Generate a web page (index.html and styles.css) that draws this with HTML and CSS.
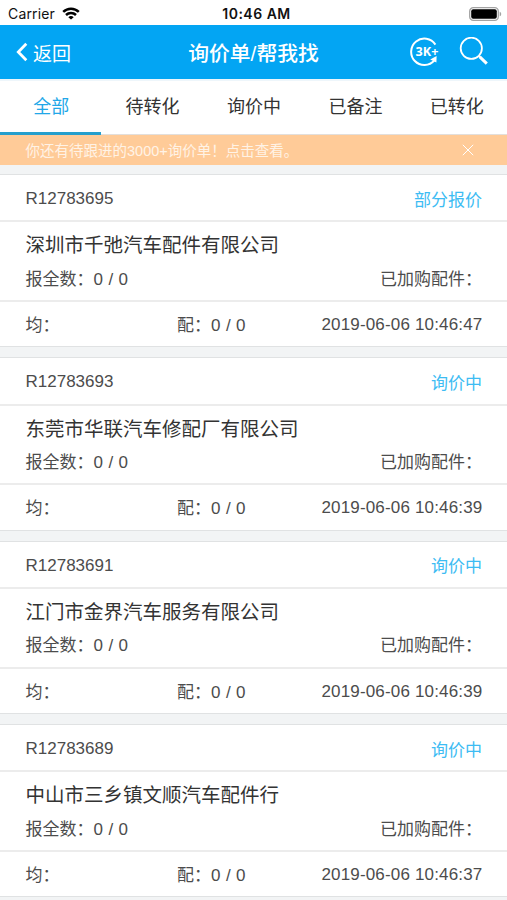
FILE: index.html
```html
<!DOCTYPE html>
<html lang="zh-CN">
<head>
    <meta charset="UTF-8">
    <meta name="viewport" content="width=device-width, initial-scale=1.0">
    <title>询价单/帮我找</title>
    <link rel="stylesheet" href="styles.css">
</head>
<body>

<div class="statusbar">
    <div class="carrier">
        <span>Carrier</span>
        <svg class="wifi" width="18" height="13" viewBox="0 0 18 13" fill="none" stroke="#000" stroke-width="2.5">
            <path d="M1.2 4.9a11.2 11.2 0 0 1 15.6 0"/>
            <path d="M4 8a7.2 7.2 0 0 1 10 0"/>
            <path d="M9 12.6L6.3 10.2a3.9 3.9 0 0 1 5.4 0z" fill="#000" stroke="none"/>
        </svg>
    </div>
    <div class="time">10:46 AM</div>
    <svg class="battery" width="33" height="14" viewBox="0 0 33 14">
        <rect x="0.7" y="0.7" width="28.6" height="12.6" rx="3.6" fill="#fff" stroke="#a3a3a3" stroke-width="1.3"/>
        <rect x="2.2" y="2.2" width="25.6" height="9.6" rx="2" fill="#000"/>
        <path d="M30.7 4.7c2 .6 2 4 0 4.6z" fill="#a3a3a3"/>
    </svg>
</div>

<header class="navbar">
    <a class="back">
        <svg width="12" height="20" viewBox="0 0 12 20" fill="none" stroke="#fff" stroke-width="2.8">
            <path d="M10.3 1.8L2.3 10l8 8.2"/>
        </svg>
        <span>返回</span>
    </a>
    <h1>询价单/帮我找</h1>
    <div class="actions">
        <svg width="30" height="30" viewBox="0 0 30 30" fill="none" stroke="#fff" stroke-width="2">
            <path d="M26.4 7.6A13.2 13.2 0 1 0 25.4 23.4"/>
            <path d="M27.6 19l-.2 6.6-6.2-3z" fill="#fff" stroke="none"/>
            <text x="6.6" y="19.4" class="badge-text">3K+</text>
        </svg>
        <svg width="30" height="30" viewBox="0 0 30 30" fill="none" stroke="#fff">
            <circle cx="12.3" cy="11.3" r="10.6" stroke-width="1.8"/>
            <path d="M19.8 18.9l1.5 1.4" stroke-width="2"/>
            <path d="M20.8 19.8l7 6.8" stroke-width="3"/>
        </svg>
    </div>
</header>

<nav class="tabs">
    <a class="tab active">全部</a>
    <a class="tab">待转化</a>
    <a class="tab">询价中</a>
    <a class="tab">已备注</a>
    <a class="tab">已转化</a>
</nav>

<div class="notice">
    <span>你还有待跟进的3000+询价单！点击查看。</span>
    <svg width="12" height="12" viewBox="0 0 12 12" stroke="#fff" stroke-width="1">
        <path d="M0.8 0.8l10.4 10.4M11.2 0.8L0.8 11.2"/>
    </svg>
</div>

<main class="list">
    <section class="card">
        <div class="row card-head">
            <span>R12783695</span>
            <span class="state">部分报价</span>
        </div>
        <div class="card-body">
            <h2>深圳市千弛汽车配件有限公司</h2>
            <div class="row">
                <span class="count">报全数：0 / 0</span>
                <span>已加购配件：</span>
            </div>
        </div>
        <div class="row card-foot">
            <span class="avg">均：</span>
            <span class="count">配：0 / 0</span>
            <span class="date">2019-06-06 10:46:47</span>
        </div>
    </section>

    <section class="card">
        <div class="row card-head">
            <span>R12783693</span>
            <span class="state">询价中</span>
        </div>
        <div class="card-body">
            <h2>东莞市华联汽车修配厂有限公司</h2>
            <div class="row">
                <span class="count">报全数：0 / 0</span>
                <span>已加购配件：</span>
            </div>
        </div>
        <div class="row card-foot">
            <span class="avg">均：</span>
            <span class="count">配：0 / 0</span>
            <span class="date">2019-06-06 10:46:39</span>
        </div>
    </section>

    <section class="card">
        <div class="row card-head">
            <span>R12783691</span>
            <span class="state">询价中</span>
        </div>
        <div class="card-body">
            <h2>江门市金界汽车服务有限公司</h2>
            <div class="row">
                <span class="count">报全数：0 / 0</span>
                <span>已加购配件：</span>
            </div>
        </div>
        <div class="row card-foot">
            <span class="avg">均：</span>
            <span class="count">配：0 / 0</span>
            <span class="date">2019-06-06 10:46:39</span>
        </div>
    </section>

    <section class="card">
        <div class="row card-head">
            <span>R12783689</span>
            <span class="state">询价中</span>
        </div>
        <div class="card-body">
            <h2>中山市三乡镇文顺汽车配件行</h2>
            <div class="row">
                <span class="count">报全数：0 / 0</span>
                <span>已加购配件：</span>
            </div>
        </div>
        <div class="row card-foot">
            <span class="avg">均：</span>
            <span class="count">配：0 / 0</span>
            <span class="date">2019-06-06 10:46:37</span>
        </div>
    </section>
</main>

</body>
</html>
```
FILE: styles.css
```css
* {
    box-sizing: border-box;
}
body {
    margin: 0;
    height: 900px;
    overflow: hidden;
    background-color: #f2f4f5;
    color: #4c4c4c;
    font-family: "Liberation Sans", "Noto Sans CJK SC", sans-serif;
    font-size: 17px;
}
svg {
    display: block;
    flex: none;
}
h1, h2 {
    margin: 0;
}

/* 状态栏 */
.statusbar {
    display: grid;
    grid-template-columns: 1fr auto 1fr;
    align-items: center;
    height: 25px;
    padding: 2px 5px 0 8px;
    background-color: #fff;
    color: #111;
    font-family: Inter, sans-serif;
    font-size: 14px;
}
.carrier {
    display: flex;
    align-items: center;
    gap: 7px;
    letter-spacing: 0.15px;
}
.time {
    padding-left: 3px;
    font-weight: 600;
    letter-spacing: 0.5px;
}
.battery {
    justify-self: end;
}

/* 导航栏 */
.navbar {
    display: grid;
    grid-template-columns: 1fr auto 1fr;
    align-items: center;
    height: 54px;
    padding: 0 18px 0 16px;
    background-color: #03a5f3;
    color: #fff;
}
.back {
    display: flex;
    align-items: center;
    gap: 5px;
    font-size: 19px;
}
.navbar h1 {
    padding-left: 2px;
    font-size: 20.8px;
    font-weight: 500;
}
.actions {
    display: flex;
    justify-content: flex-end;
    gap: 20px;
}
.badge-text {
    fill: #fff;
    stroke: none;
    font-family: "Open Sans", sans-serif;
    font-size: 12.6px;
    font-weight: 700;
}

/* 标签页 */
.tabs {
    display: flex;
    height: 56px;
    background-color: #fff;
    border-top: 2px solid #eef6fb;
    border-bottom: 1px solid #e2dfdc;
}
.tab {
    flex: 1;
    height: 54px;
    padding-left: 1px;
    line-height: 52px;
    text-align: center;
    color: #333;
    font-size: 18px;
}
.tab.active {
    color: #22a7e8;
    border-bottom: 3px solid #259fcd;
}

.notice {
    display: flex;
    align-items: center;
    justify-content: space-between;
    height: 30px;
    padding: 0 33px 0 25.5px;
    background-color: #ffcb98;
    color: #fff3e6;
    font-size: 14.5px;
}
.notice span {
    padding-bottom: 2px;
}

/* 询价单列表 */
.list {
    padding-top: 9px;
}
.card {
    height: 173.3px;
    margin-bottom: 10px;
    background-color: #fff;
    border-top: 1px solid #e0e2e3;
    border-bottom: 1px solid #e0e2e3;
}
.row {
    display: flex;
    align-items: center;
    justify-content: space-between;
}
.card-head {
    height: 47.3px;
    padding: 3px 25px 0 25.5px;
    border-bottom: 2px solid #ececec;
}
.state {
    padding-bottom: 2px;
    color: #3dbcf3;
}
.card-body {
    height: 79.7px;
    padding: 7px 25px 0 25.5px;
    border-bottom: 2px solid #ececec;
}
.card-body h2 {
    color: #333;
    font-size: 19.5px;
    font-weight: 400;
    line-height: 33px;
}
.card-body .row {
    height: 30px;
}
.card-foot {
    height: 44px;
    padding: 0 24.5px 0 25.5px;
}
.count {
    word-spacing: 0.7px;
}
.avg {
    width: 151.5px;
}
.date {
    flex: 1;
    padding-top: 2px;
    text-align: right;
    letter-spacing: 0.17px;
}
.card-foot .avg, .card-foot .count {
    padding-bottom: 1px;
}
```
